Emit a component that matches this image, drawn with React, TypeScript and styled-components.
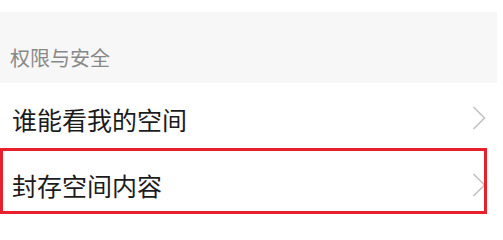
import React from 'react'
import styled, { createGlobalStyle } from 'styled-components'

const GlobalStyle = createGlobalStyle`
  html, body {
    margin: 0;
    padding: 0;
    background: #ffffff;
    font-family: "Noto Sans CJK SC", "Noto Sans", sans-serif;
  }
`

const rows = ['谁能看我的空间', '封存空间内容']

const App = () => {
  return (
    <>
      <GlobalStyle />
      <Page>
        <TopGap />
        <SectionHeader>权限与安全</SectionHeader>
        {rows.map((label, i) => (
          <Row key={label} $first={i === 0}>
            <Label>{label}</Label>
            <Chevron />
            {i === 1 && <Highlight />}
          </Row>
        ))}
      </Page>
    </>
  )
}

const Chevron = () => (
  <ChevronSvg viewBox="0 0 14 24" width="14" height="24">
    <path d="M1.5 1 L12.5 12 L1.5 23" fill="none" stroke="#c2c2c2" strokeWidth="1.6" />
  </ChevronSvg>
)

export default App

const Page = styled.div`
  width: 503px;
  height: 215px;
  overflow: hidden;
  display: flex;
  flex-direction: column;
  background: #ffffff;
`

const TopGap = styled.div`
  height: 12px;
  width: 497px;
`

const SectionHeader = styled.div`
  width: 497px;
  height: 71px;
  box-sizing: border-box;
  background: #f7f7f7;
  display: flex;
  align-items: flex-end;
  padding: 0 0 14px 10px;
  font-size: 20px;
  line-height: 22px;
  color: #888888;
`

const Row = styled.div<{ $first: boolean }>`
  position: relative;
  width: 497px;
  height: ${(p) => (p.$first ? 65 : 66)}px;
  box-sizing: border-box;
  display: flex;
  align-items: center;
  justify-content: space-between;
  padding: ${(p) => (p.$first ? '6px 12px 0 12px' : '8px 12px 0 12px')};
`

const Label = styled.div`
  font-size: 25px;
  line-height: 28px;
  color: #1c1c1c;
`

const ChevronSvg = styled.svg`
  margin-right: -1px;
  margin-top: -1px;
  display: block;
`

const Highlight = styled.div`
  position: absolute;
  left: 0;
  top: 0;
  width: 487px;
  height: 66px;
  box-sizing: border-box;
  border: 3px solid #e8202c;
  pointer-events: none;
`
